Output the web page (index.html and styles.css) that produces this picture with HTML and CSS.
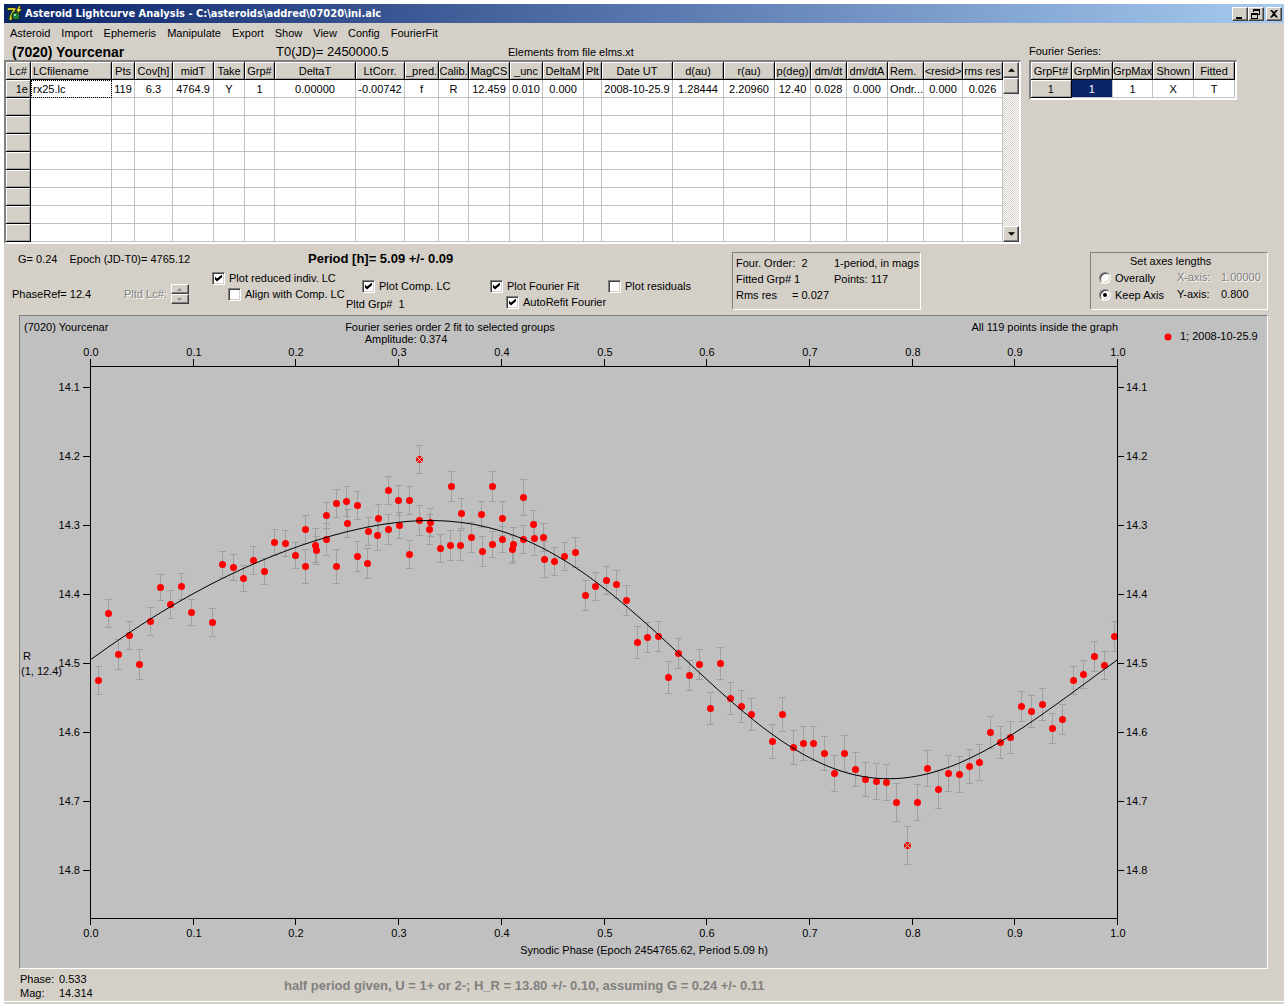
FILE: index.html
```
<!DOCTYPE html>
<html lang="en">
<head>
    <meta charset="UTF-8">
    <meta name="viewport" content="width=device-width, initial-scale=1.0">
    <title>Asteroid Lightcurve Analysis</title>
    <link rel="stylesheet" href="styles.css">
</head>
<body>
    <div class="window">
        <header class="title-bar">
            <svg class="app-icon" viewBox="0 0 16 16">
                <text x="1" y="14" font-size="16" font-weight="bold" fill="#c8c820" stroke="#202000" stroke-width="1" paint-order="stroke">7</text>
                <circle cx="10" cy="10" r="4" fill="#208040" stroke="#082010"/>
                <circle cx="9" cy="9" r="1" fill="#d0f0d0"/>
                <path d="M13 0 L10 5 H12 L11 8 L16 3 H13 L15 0 Z" fill="#ffff20" stroke="#303000" stroke-width="0.5"/>
            </svg>
            <h1>Asteroid Lightcurve Analysis - C:\asteroids\addred\07020\ini.alc</h1>
            <div class="window-buttons">
                <button aria-label="Minimize"><svg viewBox="0 0 12 10"><path d="M2 8h6v2H2z"/></svg></button>
                <button aria-label="Restore"><svg viewBox="0 0 12 10"><path d="M3 0h7v6H8V5h1V2H4v1H3zM1 4h7v6H1zM2 6v3h5V6z" fill-rule="evenodd"/></svg></button>
                <button class="close" aria-label="Close"><svg viewBox="0 0 12 10"><path d="M2 1h2l2 2 2-2h2L7 4.500l3 4H8l-2-2-2 2H2l3-4z"/></svg></button>
            </div>
        </header>

        <nav class="menu">
            <button>Asteroid</button>
            <button>Import</button>
            <button>Ephemeris</button>
            <button>Manipulate</button>
            <button>Export</button>
            <button>Show</button>
            <button>View</button>
            <button>Config</button>
            <button>FourierFit</button>
        </nav>

        <div class="tables">
            <section class="lc-section">
                <div class="lc-heading">
                    <h2>(7020) Yourcenar</h2>
                    <span class="t0">T0(JD)= 2450000.5</span>
                    <span>Elements from file elms.xt</span>
                </div>
                <div class="sunken lc-frame">
                    <table id="lcTable">
                        <colgroup>
                            <col class="w25"><col class="w81"><col class="w23"><col class="w38"><col class="w41"><col class="w31">
                            <col class="w30"><col class="w81"><col class="w49"><col class="w34"><col class="w30"><col class="w41">
                            <col class="w33"><col class="w41"><col class="w18"><col class="w71"><col class="w51"><col class="w51">
                            <col class="w36"><col class="w36"><col class="w41"><col class="w36"><col class="w39"><col class="w40">
                        </colgroup>
                        <thead>
                            <tr>
                                <th>Lc#</th><th class="left">LCfilename</th><th>Pts</th><th>Cov[h]</th><th>midT</th><th>Take</th>
                                <th>Grp#</th><th>DeltaT</th><th>LtCorr.</th><th>_pred.</th><th>Calib.</th><th>MagCS</th>
                                <th>_unc</th><th>DeltaM</th><th>Plt</th><th>Date UT</th><th>d(au)</th><th>r(au)</th>
                                <th>p(deg)</th><th>dm/dt</th><th>dm/dtA</th><th class="left">Rem.</th><th>&lt;resid&gt;</th><th>rms res</th>
                            </tr>
                        </thead>
                        <tbody>
                            <tr>
                                <th class="right">1e</th><td class="left focused">rx25.lc</td><td>119</td><td>6.3</td><td>4764.9</td><td>Y</td>
                                <td>1</td><td>0.00000</td><td>-0.00742</td><td>f</td><td>R</td><td>12.459</td>
                                <td>0.010</td><td>0.000</td><td></td><td>2008-10-25.9</td><td>1.28444</td><td>2.20960</td>
                                <td>12.40</td><td>0.028</td><td>0.000</td><td class="left">Ondr...</td><td>0.000</td><td>0.026</td>
                            </tr>
                        </tbody>
                    </table>
                    <div class="scrollbar">
                        <button aria-label="Scroll up"><svg viewBox="0 0 8 4"><path d="M4 0L8 4H0z"/></svg></button>
                        <div class="thumb"></div>
                        <div class="track"></div>
                        <button aria-label="Scroll down"><svg viewBox="0 0 8 4"><path d="M0 0H8L4 4z"/></svg></button>
                    </div>
                </div>
            </section>

            <section class="fourier-section">
                <h3>Fourier Series:</h3>
                <div class="sunken">
                    <table>
                        <thead>
                            <tr><th>GrpFt#</th><th>GrpMin</th><th>GrpMax</th><th>Shown</th><th>Fitted</th></tr>
                        </thead>
                        <tbody>
                            <tr><th>1</th><td class="selected">1</td><td>1</td><td>X</td><td>T</td></tr>
                        </tbody>
                    </table>
                </div>
            </section>
        </div>

        <div class="controls">
            <div class="epoch">
                <p class="epoch-line"><span>G= 0.24</span><span>Epoch (JD-T0)= 4765.12</span></p>
                <div class="phase-line">
                    <span>PhaseRef= 12.4</span>
                    <span class="disabled">Pltd Lc#:</span>
                    <div class="spinner">
                        <button disabled aria-label="Next lightcurve"><svg viewBox="0 0 6 3"><path d="M3 0L6 3H0z"/></svg></button>
                        <button disabled aria-label="Previous lightcurve"><svg viewBox="0 0 6 3"><path d="M0 0H6L3 3z"/></svg></button>
                    </div>
                </div>
            </div>

            <div class="plot">
                <p class="period">Period [h]= 5.09 +/- 0.09</p>
                <div class="plot-options">
                    <div class="options reduced">
                        <label><input type="checkbox" checked> Plot reduced indiv. LC</label>
                        <label class="indent"><input type="checkbox"> Align with Comp. LC</label>
                    </div>
                    <div class="options comp">
                        <label class="indent"><input type="checkbox" checked> Plot Comp. LC</label>
                        <span class="pltd-grp">Pltd Grp#&nbsp; 1</span>
                    </div>
                    <div class="options fit">
                        <label><input type="checkbox" checked> Plot Fourier Fit</label>
                        <label class="indent"><input type="checkbox" checked> AutoRefit Fourier</label>
                    </div>
                    <div class="options">
                        <label><input type="checkbox"> Plot residuals</label>
                    </div>
                </div>
            </div>

            <div class="panel fit-result">
                <span>Four. Order:&nbsp; 2</span><span>1-period, in mags</span>
                <span>Fitted Grp# 1</span><span>Points: 117</span>
                <span class="rms">Rms res <b>= 0.027</b></span>
            </div>

            <fieldset class="panel axes">
                <legend>Set axes lengths</legend>
                <label><input type="radio" name="axes"> Overally</label>
                <span class="disabled">X-axis:</span><span class="disabled">1.00000</span>
                <label><input type="radio" name="axes" checked> Keep Axis</label>
                <span>Y-axis:</span><span>0.800</span>
            </fieldset>
        </div>

        <div class="graph">
            <svg id="graph" viewBox="20 316 1247 652">
                <text x="24" y="331">(7020) Yourcenar</text>
                <text x="450" y="331" class="mid">Fourier series order 2 fit to selected groups</text>
                <text x="406" y="343" class="mid">Amplitude: 0.374</text>
                <text x="1118" y="331" class="end">All 119 points inside the graph</text>
                <circle class="point" cx="1168" cy="337" r="3.5"/>
                <text x="1180" y="340">1; 2008-10-25.9</text>
                <text x="23" y="660">R</text>
                <text x="21" y="675">(1, 12.4)</text>
                <text x="644" y="954" class="mid">Synodic Phase (Epoch 2454765.62, Period 5.09 h)</text>
                <g id="plot"></g>
                <g id="axes"></g>
            </svg>
        </div>

        <footer class="status">
            <dl>
                <dt>Phase:</dt><dd>0.533</dd>
                <dt>Mag:</dt><dd>14.314</dd>
            </dl>
            <p>half period given, U = 1+ or 2-; H_R = 13.80 +/- 0.10, assuming G = 0.24 +/- 0.11</p>
        </footer>
    </div>

    <script src="script.js"></script>
</body>
</html>
```
FILE: styles.css
```
* {
    box-sizing: border-box;
}

body {
    margin: 0;
    padding: 4px 4px 0;
    font-family: "Liberation Sans", Arial, sans-serif;
    font-size: 11px;
    line-height: 16px;
    color: #000;
    background: #fff;
}

h1, h2, h3, p, dl, dd {
    margin: 0;
}

button {
    display: flex;
    align-items: center;
    justify-content: center;
    padding: 0;
    font: inherit;
    color: inherit;
    background: #d4d0c8;
    border: 1px solid;
    border-color: #fff #404040 #404040 #fff;
    box-shadow: inset -1px -1px #808080;
}

.window {
    background: #d4d0c8;
    padding-bottom: 2px;
}

/* title bar and menu */
.title-bar {
    display: flex;
    align-items: center;
    height: 19px;
    padding: 0 2px;
    background: linear-gradient(to right, #0a246a, #a6caf0);
}

.app-icon {
    width: 16px;
    height: 16px;
    overflow: visible;
}

.title-bar h1 {
    flex: 1;
    margin-left: 3px;
    font-family: "DejaVu Sans Condensed", "Noto Sans", sans-serif;
    font-size: 11px;
    color: #fff;
    white-space: nowrap;
}

.window-buttons {
    display: flex;
}

.window-buttons button {
    width: 16px;
    height: 14px;
}

.window-buttons svg {
    width: 12px;
    height: 10px;
}

.window-buttons .close {
    margin-left: 2px;
}

.menu {
    display: flex;
    gap: 11px;
    height: 20px;
    padding-left: 6px;
}

.menu button {
    border: none;
    box-shadow: none;
    background: none;
}

/* tables */
.tables {
    display: grid;
    grid-template-columns: minmax(0, 1017px) 208px;
    gap: 8px;
    align-items: start;
}

.lc-heading {
    display: flex;
    align-items: center;
    height: 17px;
    padding-left: 8px;
}

.lc-heading h2 {
    width: 264px;
    font-size: 14px;
}

.lc-heading .t0 {
    width: 232px;
    font-size: 13px;
}

.fourier-section h3 {
    font-size: 11px;
    font-weight: normal;
    line-height: 17px;
}

.sunken {
    padding-right: 1px;
    background: #fff;
    border: 1px solid;
    border-width: 2px 1px 2px 2px;
    border-color: #808080 #fff #fff #808080;
}

.lc-frame {
    display: flex;
}

table {
    width: 100%;
    table-layout: fixed;
    border-spacing: 0;
}

th, td {
    height: 18px;
    padding: 0;
    line-height: 16px;
    text-align: center;
    font-weight: normal;
    white-space: nowrap;
    overflow: hidden;
    border-right: 1px solid #c0c0c0;
    border-bottom: 1px solid #c0c0c0;
}

th {
    background: #d4d0c8;
    border-color: #000;
    box-shadow: inset 1px 1px #fff, inset -1px -1px #a0a0a0;
}

.left {
    text-align: left;
    padding-left: 2px;
}

.right {
    text-align: right;
    padding-right: 2px;
}

.focused {
    outline: 1px dotted #000;
    outline-offset: -1px;
}

.selected {
    color: #fff;
    background: #0a246a;
}

.w18 { width: 18px; }
.w23 { width: 23px; }
.w25 { width: 25px; }
.w30 { width: 30px; }
.w31 { width: 31px; }
.w33 { width: 33px; }
.w34 { width: 34px; }
.w36 { width: 36px; }
.w38 { width: 38px; }
.w39 { width: 39px; }
.w40 { width: 40px; }
.w41 { width: 41px; }
.w49 { width: 49px; }
.w51 { width: 51px; }
.w71 { width: 71px; }
.w81 { width: 81px; }

.scrollbar {
    display: flex;
    flex: 0 0 16px;
    flex-direction: column;
}

.scrollbar button, .thumb {
    height: 16px;
}

.scrollbar svg {
    width: 7px;
    height: 4px;
}

.thumb {
    background: #d4d0c8;
    border: 1px solid;
    border-color: #fff #404040 #404040 #fff;
    box-shadow: inset -1px -1px #808080;
}

.track {
    flex: 1;
    background: repeating-conic-gradient(#d4d0c8 0 25%, #fff 0 50%) 0 0 / 2px 2px;
}

/* controls between the table and the graph */
.controls {
    display: grid;
    grid-template-columns: 204px 524px 189px 1fr;
    padding: 8px 16px 1px 0;
    white-space: nowrap;
}

.epoch-line {
    display: flex;
    gap: 12px;
    padding-left: 14px;
    line-height: 14px;
}

.phase-line {
    display: flex;
    align-items: center;
    margin-top: 18px;
    padding-left: 8px;
}

.phase-line > span:first-child {
    width: 112px;
}

.spinner {
    width: 18px;
    margin-left: 4px;
}

.spinner button {
    width: 100%;
    height: 10px;
}

.spinner svg {
    width: 5px;
    height: 3px;
    fill: #808080;
}

.disabled {
    color: #808080;
    text-shadow: 1px 1px #fff;
}

.period {
    padding-left: 100px;
    font-size: 13px;
    font-weight: bold;
    line-height: 14px;
}

.plot-options {
    display: flex;
    padding: 4px 0 0 4px;
}

.options {
    padding-top: 8px;
}

.options label {
    display: flex;
    align-items: center;
    height: 16px;
}

.options.reduced {
    width: 134px;
    padding-top: 0;
}

.options.comp {
    width: 144px;
}

.options.fit {
    width: 118px;
}

.options .indent {
    padding-left: 16px;
}

.pltd-grp {
    display: block;
    line-height: 20px;
}

input {
    appearance: none;
    display: flex;
    flex: none;
    align-items: center;
    justify-content: center;
    width: 13px;
    height: 13px;
    margin: 0 4px 0 0;
    background: #fff;
    border: 1px solid;
    border-color: #808080 #fff #fff #808080;
    box-shadow: inset 1px 1px #404040, inset -1px -1px #d4d0c8;
}

input[type="checkbox"]:checked::before {
    content: "";
    width: 7px;
    height: 7px;
    background: #000;
    clip-path: polygon(0 28%, 28% 58%, 100% 0, 100% 38%, 28% 100%, 0 70%);
}

input[type="radio"] {
    width: 12px;
    height: 12px;
    border-radius: 50%;
}

input[type="radio"]:checked::before {
    content: "";
    width: 4px;
    height: 4px;
    border-radius: 50%;
    background: #000;
}

.panel {
    height: 58px;
    margin: 0;
    border: 1px solid;
    border-color: #808080 #fff #fff #808080;
}

.fit-result {
    display: grid;
    grid-template-columns: 98px 1fr;
    align-content: start;
    padding: 2px 3px;
}

.rms b {
    margin-left: 12px;
    font-weight: normal;
}

.axes {
    display: grid;
    grid-template-columns: 78px 44px 1fr;
    justify-self: end;
    align-content: start;
    width: 178px;
    padding: 0 0 0 8px;
}

.axes legend {
    float: left;
    grid-column: 1 / -1;
    padding: 0 0 0 31px;
}

.axes label {
    display: flex;
    align-items: center;
}

.axes label, .axes span {
    height: 17px;
}

/* graph */
.graph {
    margin: 0 16px 0 15px;
    background: #c0c0c0;
    border: 1px solid;
    border-color: #808080 #fff #fff #808080;
}

.graph svg {
    display: block;
    width: 100%;
    font-size: 11px;
}

.mid {
    text-anchor: middle;
}

.end {
    text-anchor: end;
}

.axis {
    fill: none;
    stroke: #000;
    shape-rendering: crispEdges;
}

.error-bar {
    fill: none;
    stroke: #a0a0a0;
    shape-rendering: crispEdges;
}

.point {
    fill: #f00;
}

.cross {
    stroke: #c0c0c0;
}

.curve {
    fill: none;
    stroke: #000;
}

/* status line */
.status {
    display: flex;
    align-items: center;
    padding: 3px 0 1px 16px;
    border-bottom: 1px solid #fff;
}

.status dl {
    display: grid;
    grid-template-columns: 39px 225px;
    line-height: 14px;
}

.status p {
    font-size: 13px;
    font-weight: bold;
    color: #808080;
}
```
FILE: script.js
```
// empty rows under the loaded lightcurve
const lcBody = document.querySelector("#lcTable tbody");
for (let i = 0; i < 8; i++) {
    lcBody.insertAdjacentHTML("beforeend", "<tr><th></th>" + "<td></td>".repeat(23) + "</tr>");
}

const LEFT = 90, RIGHT = 1117, TOP = 366, BOTTOM = 918;

// x, y, half length of the error bar
const points = [
    [98, 680, 14], [108, 613, 14], [118, 654, 15], [129, 635, 14], [139, 664, 15], [150, 621, 14],
    [160, 587, 13], [170, 604, 14], [181, 586, 13], [191, 612, 13], [212, 622, 14], [222, 564, 13],
    [233, 567, 13], [243, 578, 13], [253, 560, 14], [264, 571, 13], [274, 542, 13], [285, 543, 13],
    [295, 555, 13], [305, 529, 14], [305, 566, 17], [315, 545, 17], [316, 550, 14], [326, 515, 13],
    [326, 539, 16], [336, 503, 14], [336, 566, 17], [346, 501, 15], [347, 523, 14], [357, 505, 14],
    [357, 556, 15], [367, 563, 15], [368, 531, 14], [377, 535, 15], [378, 518, 14], [388, 490, 14],
    [388, 529, 15], [398, 500, 15], [399, 525, 13], [409, 500, 14], [409, 554, 14], [419, 520, 15],
    [429, 529, 15], [430, 522, 14], [440, 548, 14], [450, 545, 15], [451, 486, 15], [460, 545, 15],
    [461, 513, 15], [471, 537, 15], [481, 514, 13], [482, 551, 15], [492, 486, 15], [492, 544, 13],
    [502, 518, 17], [502, 539, 13], [512, 549, 14], [513, 544, 17], [523, 497, 18], [523, 539, 14],
    [533, 524, 14], [534, 538, 17], [543, 537, 14], [544, 559, 18], [554, 561, 14], [564, 556, 14],
    [575, 552, 15], [585, 595, 15], [595, 586, 14], [606, 580, 14], [616, 584, 14], [626, 600, 15],
    [637, 642, 16], [647, 637, 15], [658, 636, 15], [668, 677, 16], [678, 653, 15], [689, 675, 15],
    [699, 664, 15], [710, 708, 16], [720, 663, 16], [730, 698, 16], [741, 706, 16], [751, 714, 16],
    [772, 741, 17], [782, 714, 17], [793, 747, 17], [803, 743, 17], [813, 743, 17], [824, 753, 17],
    [834, 773, 18], [844, 753, 18], [855, 769, 17], [865, 779, 17], [876, 781, 18], [886, 782, 18],
    [896, 802, 19], [917, 802, 18], [927, 768, 18], [938, 789, 19], [948, 773, 18], [959, 774, 18],
    [969, 766, 17], [979, 762, 18], [990, 732, 16], [1000, 742, 16], [1010, 737, 16], [1021, 706, 15],
    [1031, 711, 16], [1042, 704, 16], [1052, 728, 15], [1062, 719, 15], [1073, 680, 14], [1083, 674, 14],
    [1094, 656, 15], [1104, 665, 14], [1114, 636, 15]
];

// points left out of the fit
const rejected = [[419, 459, 14], [907, 845, 19]];

function errorBar([x, y, e]) {
    return `<path class="error-bar" d="M${x - 3} ${y - e + 0.5}h7M${x - 3} ${y + e + 0.5}h7M${x + 0.5} ${y - e}v${2 * e}"/>`;
}

function dot([x, y]) {
    return `<circle class="point" cx="${x + 0.5}" cy="${y + 0.5}" r="3.5"/>`;
}

function cross([x, y]) {
    return `<path class="cross" d="M${x - 2} ${y - 2}l5 5m0 -5l-5 5"/>`;
}

// second order Fourier series
function fit(phase) {
    const t = 2 * Math.PI * phase;
    return 638.9 + 36.2 * Math.cos(t) - 122.1 * Math.sin(t) - 15 * Math.cos(2 * t) + 2.3 * Math.sin(2 * t);
}

let curve = "";
for (let x = LEFT; x <= RIGHT; x += 3) {
    const y = fit((x - LEFT) / (RIGHT - LEFT));
    curve += (curve ? "L" : "M") + x + " " + y.toFixed(1);
}
curve += `L${RIGHT} ${fit(1).toFixed(1)}`;

const all = points.concat(rejected);
document.getElementById("plot").innerHTML =
    all.map(errorBar).join("") +
    all.map(dot).join("") +
    rejected.map(cross).join("") +
    `<path class="curve" d="${curve}"/>`;

let axes = `<rect class="axis" x="${LEFT + 0.5}" y="${TOP + 0.5}" width="${RIGHT - LEFT}" height="${BOTTOM - TOP}"/>`;
for (let i = 0; i <= 10; i++) {
    const x = Math.round(LEFT + (RIGHT - LEFT) * i / 10);
    const label = (i / 10).toFixed(1);
    axes += `<path class="axis" d="M${x + 0.5} ${TOP - 7}v7M${x + 0.5} ${BOTTOM}v7"/>`;
    axes += `<text class="mid" x="${x + 1}" y="356">${label}</text><text class="mid" x="${x + 1}" y="937">${label}</text>`;
}
for (let i = 1; i <= 8; i++) {
    const y = 318 + 69 * i;
    const label = (14 + i / 10).toFixed(1);
    axes += `<path class="axis" d="M${LEFT - 7} ${y + 0.5}h7M${RIGHT} ${y + 0.5}h7"/>`;
    axes += `<text class="end" x="80" y="${y + 4}">${label}</text><text x="1126" y="${y + 4}">${label}</text>`;
}
document.getElementById("axes").innerHTML = axes;
```
